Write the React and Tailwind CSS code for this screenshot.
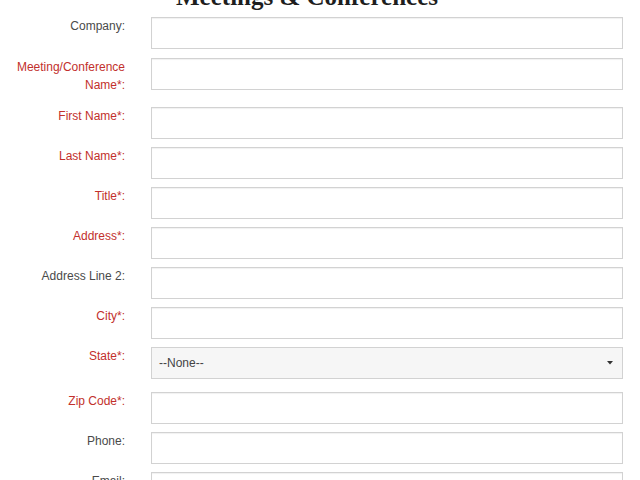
const fields = [
  { label: "Company:", gap: "mb-[9px]" },
  { label: ["Meeting/Conference", "Name*:"], required: true, gap: "mb-[13px]" },
  { label: "First Name*:", required: true },
  { label: "Last Name*:", required: true },
  { label: "Title*:", required: true },
  { label: "Address*:", required: true },
  { label: "Address Line 2:" },
  { label: "City*:", required: true },
  { label: "State*:", required: true, select: true, gap: "mb-[13px]" },
  { label: "Zip Code*:", required: true },
  { label: "Phone:" },
  { label: "Email:" },
];

function FieldRow({ field }) {
  const lines = Array.isArray(field.label) ? field.label : [field.label];
  return (
    <div className={`flex items-start ${field.gap || "mb-[8px]"}`}>
      <label
        className={`w-[125px] shrink-0 text-right text-[12px] leading-[18px] ${
          field.required ? "text-[#c2302c]" : "text-[#4a4a4a]"
        }`}
      >
        {lines.map((l) => (
          <span key={l} className="block">
            {l}
          </span>
        ))}
      </label>
      {field.select ? (
        <div className="ml-[26px] flex h-[32px] w-[472px] items-center justify-between border border-[#d2d2d2] bg-[#f6f6f6] pl-[7px] pr-[9px] text-[12px] text-[#444]">
          <span>--None--</span>
          <svg width="6" height="4" viewBox="0 0 6 4">
            <path d="M0 0 H6 L3 3.5 Z" fill="#333" />
          </svg>
        </div>
      ) : (
        <input
          type="text"
          className="ml-[26px] h-[32px] w-[472px] border border-[#d2d2d2] bg-white shadow-[inset_0_1px_1px_rgba(0,0,0,0.06)] outline-none"
        />
      )}
    </div>
  );
}

export default function App() {
  return (
    <div
      className="h-[480px] w-[640px] overflow-hidden bg-white"
      style={{ fontFamily: '"Liberation Sans", Arial, sans-serif' }}
    >
      <h1
        className="mt-[-18px] h-[35px] w-[614px] text-center text-[25px] font-bold leading-[30px] text-[#1e1e1e]"
        style={{ fontFamily: '"Liberation Serif", "Times New Roman", serif' }}
      >
        Meetings &amp; Conferences
      </h1>
      <form>
        {fields.map((f, i) => (
          <FieldRow key={i} field={f} />
        ))}
      </form>
    </div>
  );
}
